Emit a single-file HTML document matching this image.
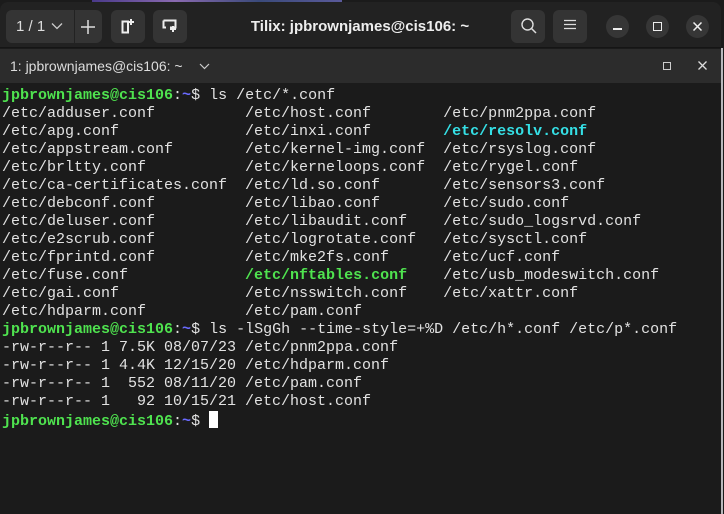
<!DOCTYPE html>
<html><head><meta charset="utf-8"><style>
*{margin:0;padding:0;box-sizing:border-box}
body{width:724px;height:514px;background:#1b1b1b;position:relative;overflow:hidden;font-family:"Liberation Sans",sans-serif}
.top{position:absolute;left:0;top:0;width:724px;height:3px;background:#1b1b1b}
.wall{position:absolute;left:92px;top:0;width:250px;height:2px;background:linear-gradient(90deg,#4a3a8a,#8a6ab0,#3a4a7a,#5a5a9a)}
.title{position:absolute;left:0;top:2px;width:721px;height:46px;background:#222222;border-radius:8px 8px 0 0;border-bottom:1px solid #151515}
.btn{position:absolute;top:8px;height:33px;background:#343434;border-radius:6px;color:#ddd}
.tabbar{position:absolute;left:0;top:49px;width:721px;height:34px;background:#2c2c2c}
.term{position:absolute;left:0;top:83px;width:721px;height:431px;background:#1b1b1b}
.edge{position:absolute;left:721px;top:0;width:3px;height:514px;background:#1b1b1b}
.edge2{position:absolute;left:721px;top:48px;width:2px;height:466px;background:#b8b8bc}
pre{position:absolute;left:2px;top:87px;font-family:"Liberation Mono",monospace;font-size:15px;line-height:18px;color:#e2e2e2}
.g{color:#4fe34f;font-weight:bold}.b{color:#6a6aff;font-weight:bold}.c{color:#35e0e6;font-weight:bold}.n{color:#4fe34f;font-weight:bold}
.cur{display:inline-block;width:9px;height:17px;background:#fff;vertical-align:-3px}
.circ{position:absolute;top:13px;width:23px;height:23px;border-radius:50%;background:#363636}
</style></head><body>
<div class="top"></div><div class="wall"></div>
<div class="title">
 <div class="btn" style="left:6px;width:96px"></div>
 <div style="position:absolute;left:74px;top:8px;width:1px;height:33px;background:#222"></div>
 <div style="position:absolute;left:16px;top:16px;font-size:15px;color:#ddd">1 / 1</div>
 <svg style="position:absolute;left:51px;top:20px" width="12" height="8"><path d="M1 1.5 L6 6.5 L11 1.5" stroke="#ccc" stroke-width="1.3" fill="none"/></svg>
 <svg style="position:absolute;left:81px;top:18px" width="14" height="14"><path d="M7 0V14M0 7H14" stroke="#ddd" stroke-width="1.5"/></svg>
 <div class="btn" style="left:111px;width:34px"></div>
 <svg style="position:absolute;left:121px;top:16px" width="14" height="16"><path d="M1.5 3.5H7V14.5H1.5Z" stroke="#eee" stroke-width="2" fill="none"/><path d="M10 1V7M7 4H13" stroke="#eee" stroke-width="2"/></svg>
 <div class="btn" style="left:153px;width:34px"></div>
 <svg style="position:absolute;left:162px;top:17px" width="16" height="14"><path d="M1.5 1.5H13.5V8.5H8M1.5 1.5V8.5H4" stroke="#eee" stroke-width="2" fill="none"/><path d="M11 7V13M8 10H14" stroke="#eee" stroke-width="2"/></svg>
 <div style="position:absolute;left:0;width:724px;top:16px;text-align:center;font-size:15px;font-weight:bold;color:#eee;padding-right:4px">Tilix: jpbrownjames@cis106: ~</div>
 <div class="btn" style="left:511px;width:34px"></div>
 <svg style="position:absolute;left:520px;top:15px" width="18" height="18"><circle cx="7.5" cy="7.5" r="5.5" stroke="#ddd" stroke-width="1.4" fill="none"/><path d="M11.5 11.5L16 16" stroke="#ddd" stroke-width="1.5"/></svg>
 <div class="btn" style="left:553px;width:34px"></div>
 <svg style="position:absolute;left:563px;top:17px" width="14" height="12"><path d="M1 1.5H13M1 5.5H13M1 9.5H13" stroke="#ddd" stroke-width="1.3"/></svg>
 <div class="circ" style="left:606px"></div>
 <div style="position:absolute;left:613px;top:26px;width:9px;height:1.5px;background:#eee"></div>
 <div class="circ" style="left:646px"></div>
 <div style="position:absolute;left:653px;top:20px;width:9px;height:9px;border:1.5px solid #eee"></div>
 <div class="circ" style="left:686px"></div>
 <svg style="position:absolute;left:693px;top:20px" width="9" height="9"><path d="M0.5 0.5L8.5 8.5M8.5 0.5L0.5 8.5" stroke="#eee" stroke-width="1.5"/></svg>
</div>
<div class="tabbar">
 <div style="position:absolute;left:10px;top:9px;font-size:14px;color:#ddd">1: jpbrownjames@cis106: ~</div>
 <svg style="position:absolute;left:199px;top:14px" width="11" height="7"><path d="M1 1L5.5 5.5L10 1" stroke="#ccc" stroke-width="1.2" fill="none"/></svg>
 <div style="position:absolute;left:663px;top:13px;width:8px;height:8px;border:1px solid #ccc"></div>
 <svg style="position:absolute;left:698px;top:12px" width="9" height="9"><path d="M0.5 0.5L8.5 8.5M8.5 0.5L0.5 8.5" stroke="#ddd" stroke-width="1.3"/></svg>
</div>
<div class="term"></div>
<div class="edge"></div><div class="edge2"></div>
<pre><span class="g">jpbrownjames@cis106</span>:<span class="b">~</span>$ ls /etc/*.conf
/etc/adduser.conf          /etc/host.conf        /etc/pnm2ppa.conf
/etc/apg.conf              /etc/inxi.conf        <span class="c">/etc/resolv.conf</span>
/etc/appstream.conf        /etc/kernel-img.conf  /etc/rsyslog.conf
/etc/brltty.conf           /etc/kerneloops.conf  /etc/rygel.conf
/etc/ca-certificates.conf  /etc/ld.so.conf       /etc/sensors3.conf
/etc/debconf.conf          /etc/libao.conf       /etc/sudo.conf
/etc/deluser.conf          /etc/libaudit.conf    /etc/sudo_logsrvd.conf
/etc/e2scrub.conf          /etc/logrotate.conf   /etc/sysctl.conf
/etc/fprintd.conf          /etc/mke2fs.conf      /etc/ucf.conf
/etc/fuse.conf             <span class="n">/etc/nftables.conf</span>    /etc/usb_modeswitch.conf
/etc/gai.conf              /etc/nsswitch.conf    /etc/xattr.conf
/etc/hdparm.conf           /etc/pam.conf
<span class="g">jpbrownjames@cis106</span>:<span class="b">~</span>$ ls -lSgGh --time-style=+%D /etc/h*.conf /etc/p*.conf
-rw-r--r-- 1 7.5K 08/07/23 /etc/pnm2ppa.conf
-rw-r--r-- 1 4.4K 12/15/20 /etc/hdparm.conf
-rw-r--r-- 1  552 08/11/20 /etc/pam.conf
-rw-r--r-- 1   92 10/15/21 /etc/host.conf
<span class="g">jpbrownjames@cis106</span>:<span class="b">~</span>$ <span class="cur"></span></pre>
</body></html>
